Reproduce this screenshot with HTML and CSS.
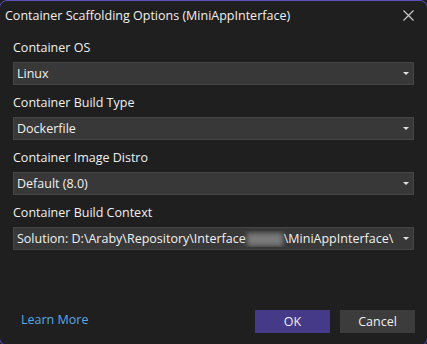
FILE: index.html
```html
<!DOCTYPE html>
<html>
<head>
<meta charset="utf-8">
<link rel="stylesheet" href="styles.css">
</head>
<body>
<div class="dialog">
  <div class="titlebar">
    <span class="title">Container Scaffolding Options (MiniAppInterface)</span>
    <span class="close">
      <svg width="11" height="11" viewBox="0 0 11 11"><path d="M0.5 0.5L10.5 10.5M10.5 0.5L0.5 10.5" stroke="#cfcfcf" stroke-width="1.1" fill="none"/></svg>
    </span>
  </div>
  <div class="form">
    <div class="field">
      <div class="label">Container OS</div>
      <div class="select"><span class="value">Linux</span><span class="arrow"></span></div>
    </div>
    <div class="field">
      <div class="label">Container Build Type</div>
      <div class="select"><span class="value">Dockerfile</span><span class="arrow"></span></div>
    </div>
    <div class="field">
      <div class="label">Container Image Distro</div>
      <div class="select"><span class="value">Default (8.0)</span><span class="arrow"></span></div>
    </div>
    <div class="field">
      <div class="label">Container Build Context</div>
      <div class="select"><span class="value">Solution: D:\Araby\Repository\Interface<span class="blur"></span>\MiniAppInterface\</span><span class="arrow"></span></div>
    </div>
  </div>
  <div class="footer">
    <span class="link">Learn More</span>
    <div class="buttons">
      <span class="btn primary">OK</span>
      <span class="btn">Cancel</span>
    </div>
  </div>
</div>
</body>
</html>
```

FILE: styles.css
```css
html, body {
  margin: 0;
  padding: 0;
  background: #1f1f1f;
  overflow: hidden;
  width: 427px;
  height: 344px;
}
.dialog {
  box-sizing: border-box;
  width: 429px;
  height: 346px;
  margin-left: -1px;
  border: 1px solid #5d4fc2;
  border-radius: 8px;
  background: #1f1f1f;
  display: flex;
  flex-direction: column;
  font-family: "Open Sans", "Noto Sans", sans-serif;
  font-size: 12.5px;
  color: #f0f0f0;
}
.titlebar {
  height: 29px;
  display: flex;
  align-items: center;
  justify-content: space-between;
  padding-left: 5px;
  padding-right: 13px;
}
.title {
  line-height: 16px;
}
.close {
  display: flex;
}
.form {
  padding: 10px 13px 0 13px;
  display: flex;
  flex-direction: column;
  gap: 10px;
}
.label {
  line-height: 16px;
  margin-bottom: 6px;
}
.select {
  box-sizing: border-box;
  height: 23px;
  background: #383838;
  border: 1px solid #454545;
  display: flex;
  align-items: center;
  padding-left: 3px;
  padding-right: 4px;
}
.value {
  flex: 1;
  white-space: nowrap;
  overflow: hidden;
  line-height: 16px;
}
.blur {
  display: inline-block;
  background: #7a7a7a;
  filter: blur(2.5px);
  width: 36px;
  height: 13px;
  vertical-align: middle;
  margin: 0 1px;
}
.arrow {
  width: 0;
  height: 0;
  border-left: 3px solid transparent;
  border-right: 3px solid transparent;
  border-top: 3px solid #e0e0e0;
  margin-left: 6px;
}
.footer {
  margin-top: auto;
  display: flex;
  align-items: center;
  justify-content: space-between;
  padding: 0 12px 12px 21px;
}
.link {
  color: #58a8e8;
  line-height: 16px;
  margin-top: -4px;
}
.buttons {
  display: flex;
  gap: 10px;
}
.btn {
  width: 75px;
  height: 23px;
  background: #3c3c3c;
  display: flex;
  align-items: center;
  justify-content: center;
  line-height: 16px;
}
.btn.primary {
  background: #453a88;
}
```
